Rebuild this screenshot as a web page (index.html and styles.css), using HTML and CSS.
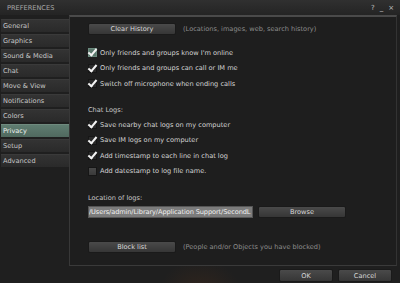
FILE: index.html
```html
<!DOCTYPE html>
<html lang="en">
<head>
  <meta charset="UTF-8">
  <link rel="stylesheet" href="styles.css">
  <title>Preferences</title>
</head>
<body>

<div class="window">
  <div class="titlebar">
    <span class="title">PREFERENCES</span>
    <div class="controls">
      <span>?</span>
      <span>_</span>
      <span>×</span>
    </div>
  </div>

  <div class="main">
    <ul class="tabs">
      <li>General</li>
      <li>Graphics</li>
      <li>Sound &amp; Media</li>
      <li>Chat</li>
      <li>Move &amp; View</li>
      <li>Notifications</li>
      <li>Colors</li>
      <li class="active">Privacy</li>
      <li>Setup</li>
      <li>Advanced</li>
    </ul>

    <div class="panel">
      <div class="row-btn first">
        <button class="btn wide">Clear History</button>
        <span class="hint">(Locations, images, web, search history)</span>
      </div>

      <div class="checks top">
        <label class="check"><span class="box focus checked"></span>Only friends and groups know I'm online</label>
        <label class="check"><span class="box checked"></span>Only friends and groups can call or IM me</label>
        <label class="check"><span class="box checked"></span>Switch off microphone when ending calls</label>
      </div>

      <div class="section">Chat Logs:</div>
      <div class="checks">
        <label class="check"><span class="box checked"></span>Save nearby chat logs on my computer</label>
        <label class="check"><span class="box checked"></span>Save IM logs on my computer</label>
        <label class="check"><span class="box checked"></span>Add timestamp to each line in chat log</label>
        <label class="check"><span class="box"></span>Add datestamp to log file name.</label>
      </div>

      <div class="section loc">Location of logs:</div>
      <div class="row-path">
        <div class="path">/Users/admin/Library/Application Support/SecondL</div>
        <button class="btn wide">Browse</button>
      </div>

      <div class="row-btn block">
        <button class="btn wide">Block list</button>
        <span class="hint">(People and/or Objects you have blocked)</span>
      </div>
    </div>
  </div>

  <div class="footer">
    <button class="btn small">OK</button>
    <button class="btn small">Cancel</button>
  </div>
</div>

</body>
</html>
```

FILE: styles.css
```css
body {
  margin: 0;
  background: #1b1b1b;
  font-family: 'DejaVu Sans', sans-serif;
  font-size: 6.6px;
  color: #d0d0d0;
}

.window {
  width: 400px;
  height: 283px;
  background: #1f1f1f;
  background-image: radial-gradient(ellipse 40px 30px at 200px 290px, rgba(120, 60, 20, 0.18), transparent);
  display: flex;
  flex-direction: column;
  overflow: hidden;
}

/* Title bar */
.titlebar {
  height: 15px;
  display: flex;
  align-items: center;
  justify-content: space-between;
  padding: 0 6px 0 7px;
  background: linear-gradient(#303030, #242424);
  flex-shrink: 0;
}

.title {
  color: #a8a8a8;
}

.controls {
  display: flex;
  gap: 5px;
  color: #c0c0c0;
  font-size: 7px;
}

/* Body */
.main {
  display: flex;
  height: 251px;
  flex-shrink: 0;
}

.tabs {
  list-style: none;
  margin: 0;
  padding: 4px 0 0 1px;
  width: 68px;
}

.tabs li {
  height: 12px;
  line-height: 12px;
  margin-bottom: 2px;
  padding-left: 2px;
  background: linear-gradient(#333, #2a2a2a);
  border-top: 1px solid #3a3a3a;
  color: #c8c8c8;
}

.tabs li.active {
  background: linear-gradient(#5f7d71, #50695f);
  border-top-color: #6f8a7e;
  color: #eef2f0;
}

.panel {
  flex: 1;
  margin-right: 3px;
  border-top: 2px solid #4a4a4a;
  border-left: 1px solid #383838;
  border-right: 1px solid #333;
  border-bottom: 1px solid #3a3a3a;
  padding-left: 18px;
  background: #1e1e1e;
}

/* Buttons */
.btn {
  font-family: inherit;
  font-size: 6.6px;
  color: #d8d8d8;
  background: linear-gradient(#4a4a4a, #363636);
  border: 1px solid #1a1a1a;
  border-radius: 2px;
  padding: 0;
  height: 12px;
  line-height: 10px;
}

.btn.wide {
  width: 88px;
}

.btn.small {
  width: 54px;
  height: 13px;
}

.row-btn {
  display: flex;
  align-items: center;
  gap: 7px;
  height: 12px;
}

.row-btn.first {
  margin-top: 6px;
}

.row-btn.block {
  margin-top: 23px;
}

.hint {
  color: #8c8c8c;
}

/* Checkboxes */
.checks {
  display: flex;
  flex-direction: column;
}

.checks.top {
  margin-top: 10px;
}

.check {
  display: flex;
  align-items: center;
  gap: 3px;
  height: 15.6px;
  color: #d4d4d4;
}

.box {
  width: 9px;
  height: 9px;
  box-sizing: border-box;
  border: 1px solid #161616;
  background: linear-gradient(#484848, #3a3a3a);
  position: relative;
}

.box.checked {
  background: #2a2a2a;
}

.box.focus {
  background: #5a786c;
  border-color: #6c8a7e;
}

.box.checked::after {
  content: '';
  position: absolute;
  left: 1px;
  top: -2px;
  width: 3px;
  height: 7px;
  border: solid #f4f4f4;
  border-width: 0 2px 2px 0;
  transform: rotate(40deg);
}

.section {
  height: 13px;
  line-height: 13px;
  margin-top: 12px;
  color: #c8c8c8;
}

.section.loc {
  margin-top: 13px;
}

/* Path row */
.row-path {
  display: flex;
  align-items: center;
  gap: 5px;
  margin-top: 1px;
}

.path {
  width: 165px;
  height: 12px;
  line-height: 10px;
  box-sizing: border-box;
  padding-left: 0;
  letter-spacing: -0.1px;
  background: #7c7c7c;
  border: 1px solid #555;
  color: #f0f0f0;
  white-space: nowrap;
  overflow: hidden;
}

/* Footer */
.footer {
  display: flex;
  justify-content: flex-end;
  gap: 5px;
  padding: 3px 8px 0 0;
}
```
